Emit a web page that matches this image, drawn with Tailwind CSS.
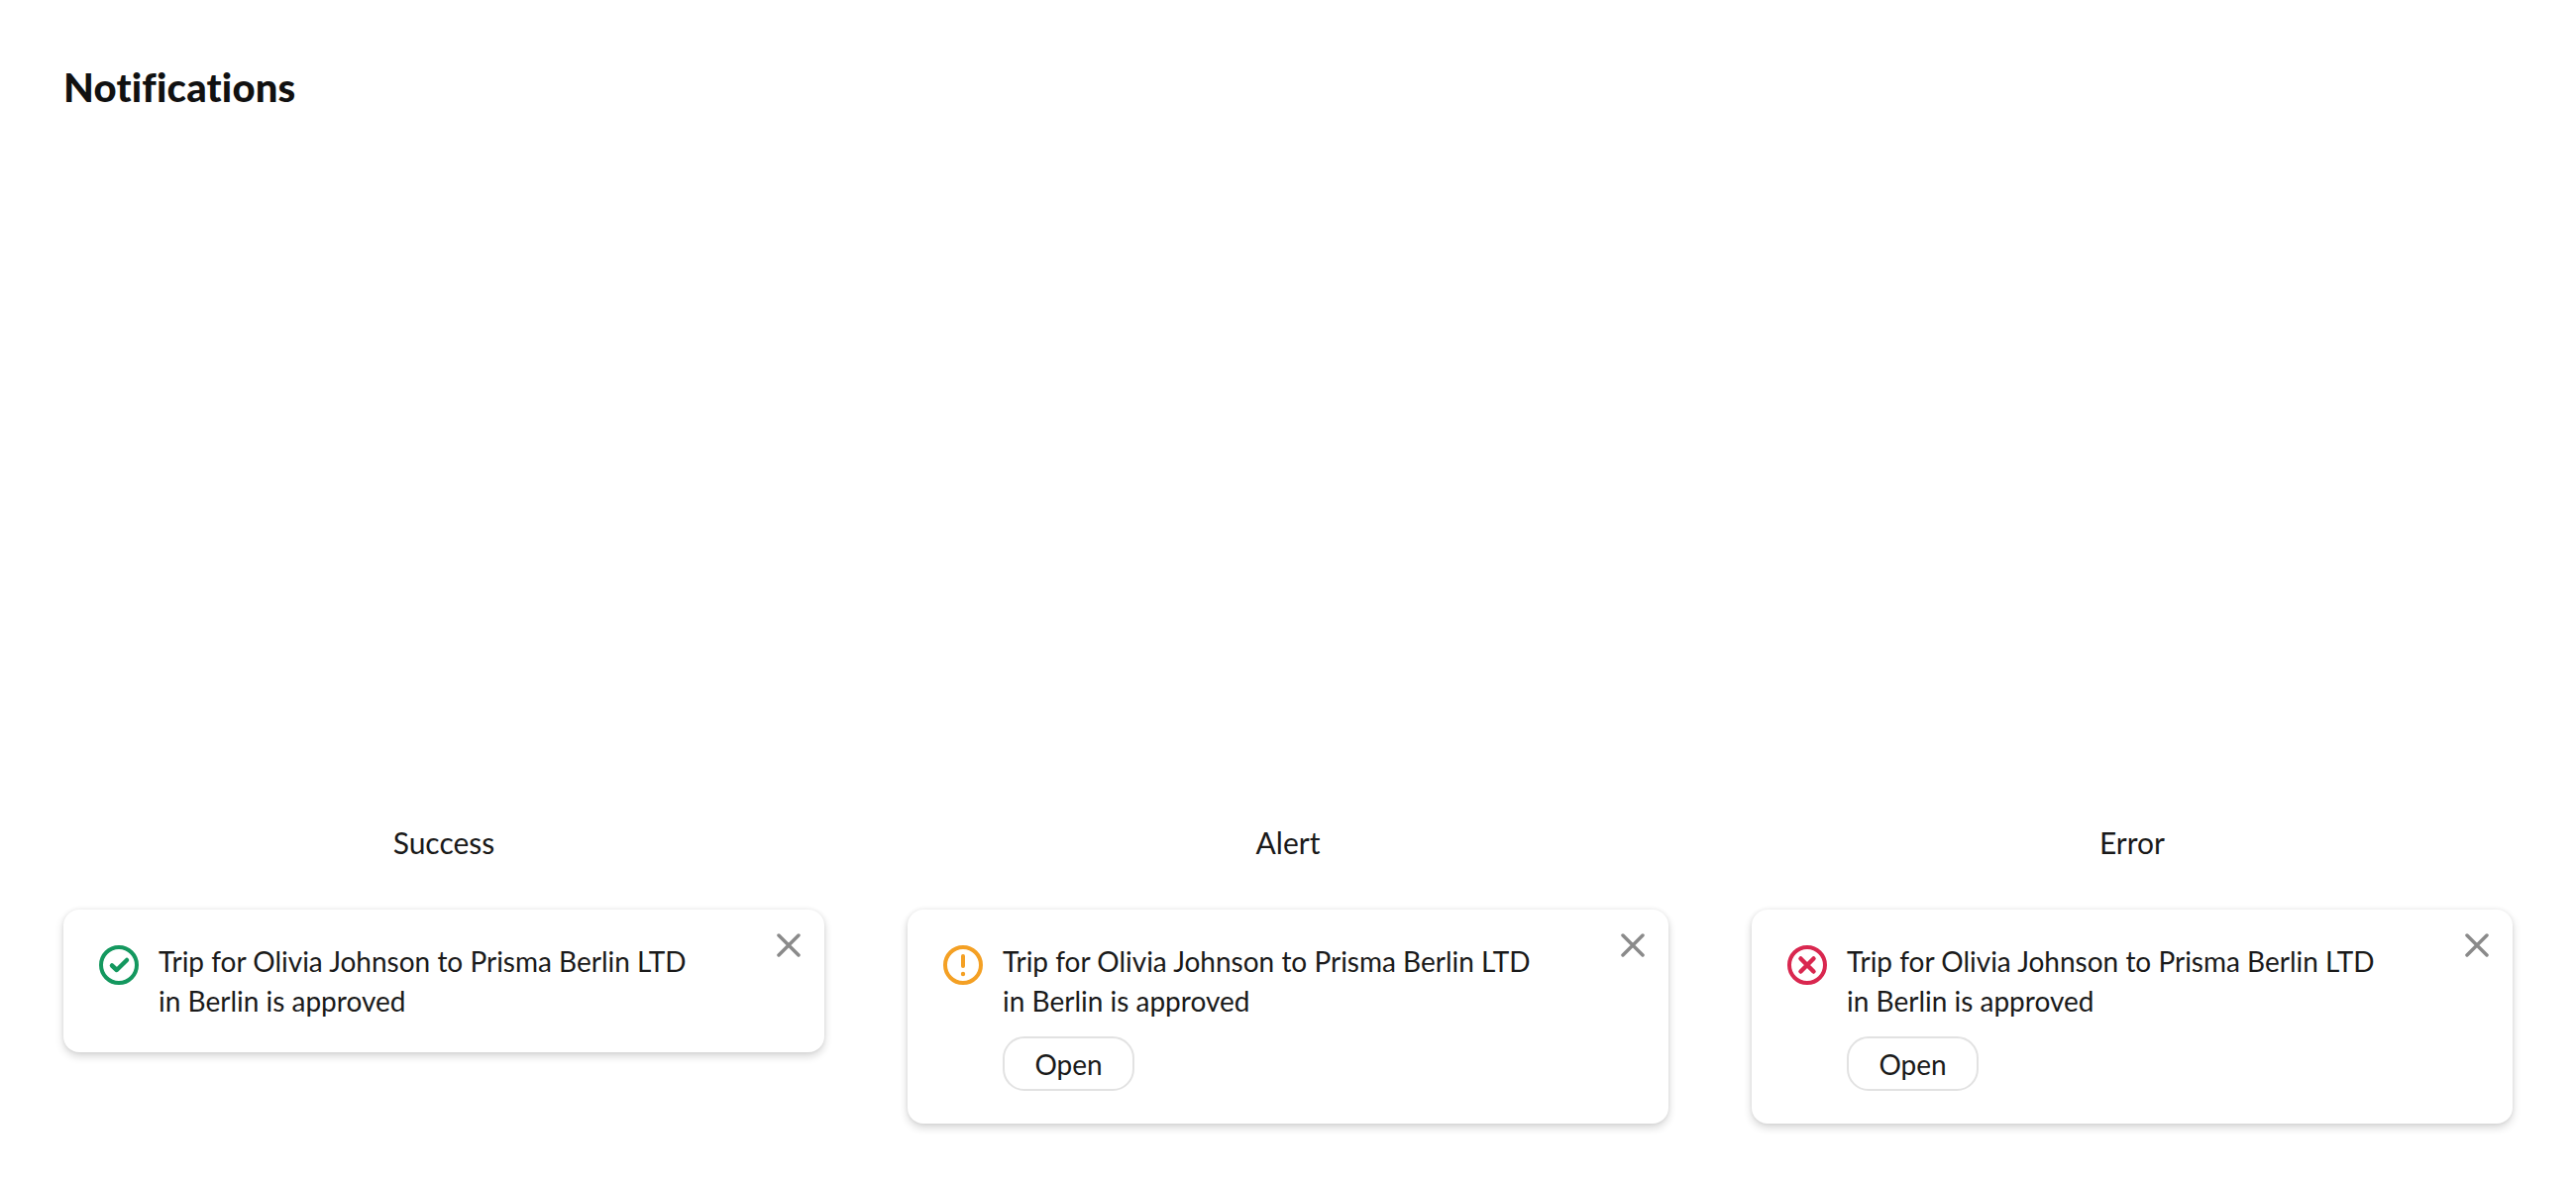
<!DOCTYPE html>
<html lang="en">

<head>
  <meta charset="UTF-8">
  <title>Notifications</title>
  <script src="https://cdn.jsdelivr.net/npm/@tailwindcss/browser@4"></script>
</head>

<body class="bg-white font-['Lato',sans-serif] text-[#1a1a1a]">
  <div class="h-[1198px] px-16 pt-[64px]">
    <h1 class="text-[40px] leading-[48px] font-black tracking-[0.2px] text-[#111]">Notifications</h1>

    <div class="grid grid-cols-3 gap-[84px] mt-[718px]">

      <!-- Success -->
      <section>
        <h2 class="text-[30px] leading-[40px] text-center">Success</h2>
        <div class="relative mt-[48px] flex gap-5 rounded-[16px] bg-white pl-9 pr-16 py-8 shadow-[0_4px_8px_rgba(0,0,0,0.16),0_0_4px_rgba(0,0,0,0.08)]">
          <svg class="w-10 h-10 mt-1 shrink-0" viewBox="0 0 40 40" fill="none" stroke="#14985f" stroke-width="4" stroke-linecap="round" stroke-linejoin="round">
            <circle cx="20" cy="20" r="18"/>
            <path d="M13 20.500l4.800 4.500 10.200-10" stroke-width="4.500"/>
          </svg>
          <p class="text-[28px] leading-[40px]">Trip for Olivia Johnson to Prisma Berlin LTD<br>in Berlin is approved</p>
          <button class="absolute top-6 right-6 w-6 h-6">
            <svg class="w-6 h-6" viewBox="0 0 24 24" fill="none" stroke="#8a8a8a" stroke-width="3.500" stroke-linecap="round"><path d="M2 2l20 20M22 2L2 22"/></svg>
          </button>
        </div>
      </section>

      <!-- Alert -->
      <section>
        <h2 class="text-[30px] leading-[40px] text-center">Alert</h2>
        <div class="relative mt-[48px] flex gap-5 rounded-[16px] bg-white pl-9 pr-16 pt-8 pb-[33px] shadow-[0_4px_8px_rgba(0,0,0,0.16),0_0_4px_rgba(0,0,0,0.08)]">
          <svg class="w-10 h-10 mt-1 shrink-0" viewBox="0 0 40 40" fill="none" stroke="#f4a024" stroke-width="4" stroke-linecap="round">
            <circle cx="20" cy="20" r="18"/>
            <path d="M20 11v10"/>
            <circle cx="20" cy="29" r="2.200" fill="#f4a024" stroke="none"/>
          </svg>
          <div>
            <p class="text-[28px] leading-[40px]">Trip for Olivia Johnson to Prisma Berlin LTD<br>in Berlin is approved</p>
            <button class="mt-4 w-[133px] h-[55px] rounded-[22px] border-2 border-[#e2e2e2] bg-white text-[28px]">Open</button>
          </div>
          <button class="absolute top-6 right-6 w-6 h-6">
            <svg class="w-6 h-6" viewBox="0 0 24 24" fill="none" stroke="#8a8a8a" stroke-width="3.500" stroke-linecap="round"><path d="M2 2l20 20M22 2L2 22"/></svg>
          </button>
        </div>
      </section>

      <!-- Error -->
      <section>
        <h2 class="text-[30px] leading-[40px] text-center">Error</h2>
        <div class="relative mt-[48px] flex gap-5 rounded-[16px] bg-white pl-9 pr-16 pt-8 pb-[33px] shadow-[0_4px_8px_rgba(0,0,0,0.16),0_0_4px_rgba(0,0,0,0.08)]">
          <svg class="w-10 h-10 mt-1 shrink-0" viewBox="0 0 40 40" fill="none" stroke="#d9274f" stroke-width="4" stroke-linecap="round">
            <circle cx="20" cy="20" r="18"/>
            <path d="M13.500 13.500l13 13M26.500 13.500l-13 13" stroke-width="4.500"/>
          </svg>
          <div>
            <p class="text-[28px] leading-[40px]">Trip for Olivia Johnson to Prisma Berlin LTD<br>in Berlin is approved</p>
            <button class="mt-4 w-[133px] h-[55px] rounded-[22px] border-2 border-[#e2e2e2] bg-white text-[28px]">Open</button>
          </div>
          <button class="absolute top-6 right-6 w-6 h-6">
            <svg class="w-6 h-6" viewBox="0 0 24 24" fill="none" stroke="#8a8a8a" stroke-width="3.500" stroke-linecap="round"><path d="M2 2l20 20M22 2L2 22"/></svg>
          </button>
        </div>
      </section>

    </div>
  </div>
</body>

</html>
